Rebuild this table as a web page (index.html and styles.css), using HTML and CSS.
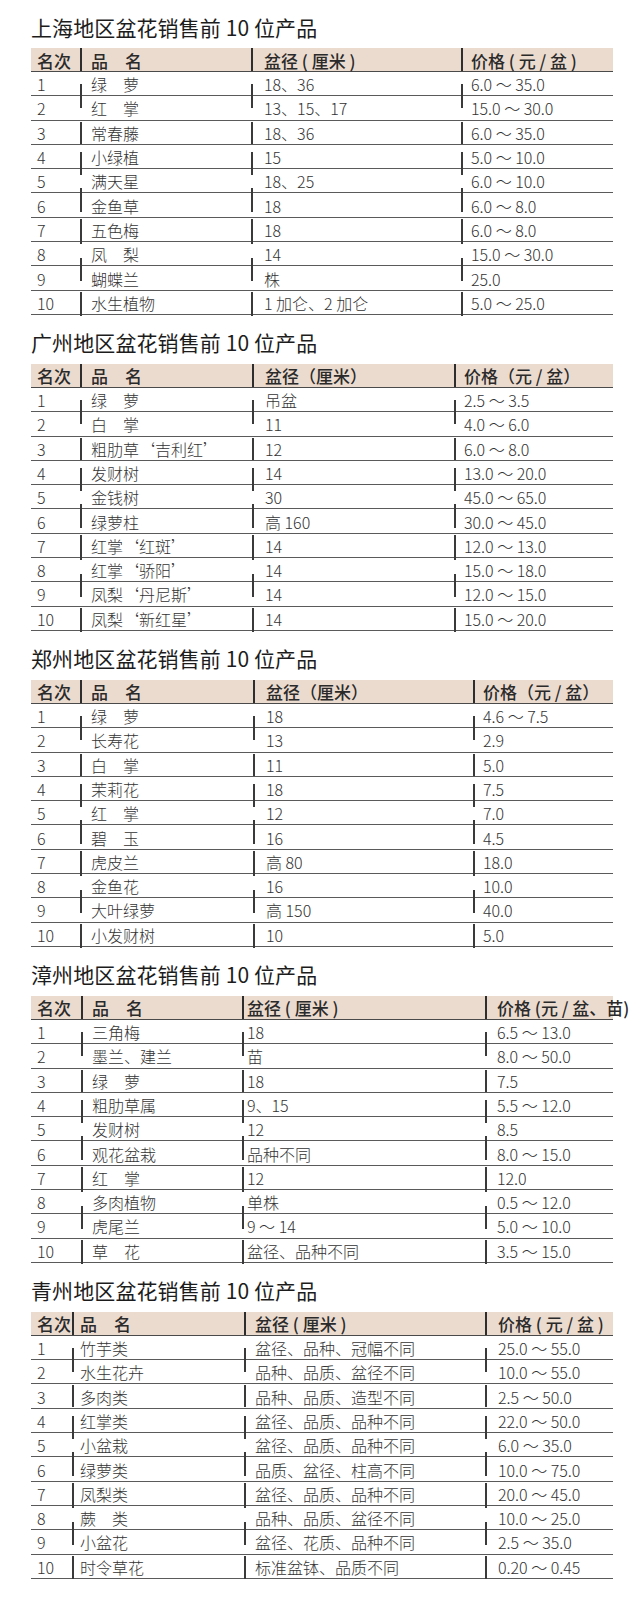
FILE: index.html
```html
<!DOCTYPE html>
<html lang="zh-CN">
<head>
<meta charset="utf-8">
<title>盆花销售前 10 位产品</title>
<link rel="stylesheet" href="styles.css">
</head>
<body>
<div class="page">

  <section class="sec t1">
    <h2 class="title">上海地区盆花销售前 10 位产品</h2>
    <div class="tbl">
      <div class="row head"><div class="c">名次</div><div class="c">品　名</div><div class="c">盆径 ( 厘米 )</div><div class="c">价格 ( 元 / 盆 )</div></div>
      <div class="row r1"><div class="c">1</div><div class="c">绿　萝</div><div class="c">18、36</div><div class="c">6.0 ～ 35.0</div></div>
      <div class="row r2"><div class="c">2</div><div class="c">红　掌</div><div class="c">13、15、17</div><div class="c">15.0 ～ 30.0</div></div>
      <div class="row r3"><div class="c">3</div><div class="c">常春藤</div><div class="c">18、36</div><div class="c">6.0 ～ 35.0</div></div>
      <div class="row r4"><div class="c">4</div><div class="c">小绿植</div><div class="c">15</div><div class="c">5.0 ～ 10.0</div></div>
      <div class="row r5"><div class="c">5</div><div class="c">满天星</div><div class="c">18、25</div><div class="c">6.0 ～ 10.0</div></div>
      <div class="row r6"><div class="c">6</div><div class="c">金鱼草</div><div class="c">18</div><div class="c">6.0 ～ 8.0</div></div>
      <div class="row r7"><div class="c">7</div><div class="c">五色梅</div><div class="c">18</div><div class="c">6.0 ～ 8.0</div></div>
      <div class="row r8"><div class="c">8</div><div class="c">凤　梨</div><div class="c">14</div><div class="c">15.0 ～ 30.0</div></div>
      <div class="row r9"><div class="c">9</div><div class="c">蝴蝶兰</div><div class="c">株</div><div class="c">25.0</div></div>
      <div class="row r10"><div class="c">10</div><div class="c">水生植物</div><div class="c">1 加仑、2 加仑</div><div class="c">5.0 ～ 25.0</div></div>
    </div>
  </section>

  <section class="sec t2">
    <h2 class="title">广州地区盆花销售前 10 位产品</h2>
    <div class="tbl">
      <div class="row head"><div class="c">名次</div><div class="c">品　名</div><div class="c">盆径（厘米）</div><div class="c">价格（元 / 盆）</div></div>
      <div class="row r1"><div class="c">1</div><div class="c">绿　萝</div><div class="c">吊盆</div><div class="c">2.5 ～ 3.5</div></div>
      <div class="row r2"><div class="c">2</div><div class="c">白　掌</div><div class="c">11</div><div class="c">4.0 ～ 6.0</div></div>
      <div class="row r3"><div class="c">3</div><div class="c">粗肋草‘吉利红’</div><div class="c">12</div><div class="c">6.0 ～ 8.0</div></div>
      <div class="row r4"><div class="c">4</div><div class="c">发财树</div><div class="c">14</div><div class="c">13.0 ～ 20.0</div></div>
      <div class="row r5"><div class="c">5</div><div class="c">金钱树</div><div class="c">30</div><div class="c">45.0 ～ 65.0</div></div>
      <div class="row r6"><div class="c">6</div><div class="c">绿萝柱</div><div class="c">高 160</div><div class="c">30.0 ～ 45.0</div></div>
      <div class="row r7"><div class="c">7</div><div class="c">红掌‘红斑’</div><div class="c">14</div><div class="c">12.0 ～ 13.0</div></div>
      <div class="row r8"><div class="c">8</div><div class="c">红掌‘骄阳’</div><div class="c">14</div><div class="c">15.0 ～ 18.0</div></div>
      <div class="row r9"><div class="c">9</div><div class="c">凤梨‘丹尼斯’</div><div class="c">14</div><div class="c">12.0 ～ 15.0</div></div>
      <div class="row r10"><div class="c">10</div><div class="c">凤梨‘新红星’</div><div class="c">14</div><div class="c">15.0 ～ 20.0</div></div>
    </div>
  </section>

  <section class="sec t3">
    <h2 class="title">郑州地区盆花销售前 10 位产品</h2>
    <div class="tbl">
      <div class="row head"><div class="c">名次</div><div class="c">品　名</div><div class="c">盆径（厘米）</div><div class="c">价格（元 / 盆）</div></div>
      <div class="row r1"><div class="c">1</div><div class="c">绿　萝</div><div class="c">18</div><div class="c">4.6 ～ 7.5</div></div>
      <div class="row r2"><div class="c">2</div><div class="c">长寿花</div><div class="c">13</div><div class="c">2.9</div></div>
      <div class="row r3"><div class="c">3</div><div class="c">白　掌</div><div class="c">11</div><div class="c">5.0</div></div>
      <div class="row r4"><div class="c">4</div><div class="c">茉莉花</div><div class="c">18</div><div class="c">7.5</div></div>
      <div class="row r5"><div class="c">5</div><div class="c">红　掌</div><div class="c">12</div><div class="c">7.0</div></div>
      <div class="row r6"><div class="c">6</div><div class="c">碧　玉</div><div class="c">16</div><div class="c">4.5</div></div>
      <div class="row r7"><div class="c">7</div><div class="c">虎皮兰</div><div class="c">高 80</div><div class="c">18.0</div></div>
      <div class="row r8"><div class="c">8</div><div class="c">金鱼花</div><div class="c">16</div><div class="c">10.0</div></div>
      <div class="row r9"><div class="c">9</div><div class="c">大叶绿萝</div><div class="c">高 150</div><div class="c">40.0</div></div>
      <div class="row r10"><div class="c">10</div><div class="c">小发财树</div><div class="c">10</div><div class="c">5.0</div></div>
    </div>
  </section>

  <section class="sec t4">
    <h2 class="title">漳州地区盆花销售前 10 位产品</h2>
    <div class="tbl">
      <div class="row head"><div class="c">名次</div><div class="c">品　名</div><div class="c">盆径 ( 厘米 )</div><div class="c">价格 (元 / 盆、苗)</div></div>
      <div class="row r1"><div class="c">1</div><div class="c">三角梅</div><div class="c">18</div><div class="c">6.5 ～ 13.0</div></div>
      <div class="row r2"><div class="c">2</div><div class="c">墨兰、建兰</div><div class="c">苗</div><div class="c">8.0 ～ 50.0</div></div>
      <div class="row r3"><div class="c">3</div><div class="c">绿　萝</div><div class="c">18</div><div class="c">7.5</div></div>
      <div class="row r4"><div class="c">4</div><div class="c">粗肋草属</div><div class="c">9、15</div><div class="c">5.5 ～ 12.0</div></div>
      <div class="row r5"><div class="c">5</div><div class="c">发财树</div><div class="c">12</div><div class="c">8.5</div></div>
      <div class="row r6"><div class="c">6</div><div class="c">观花盆栽</div><div class="c">品种不同</div><div class="c">8.0 ～ 15.0</div></div>
      <div class="row r7"><div class="c">7</div><div class="c">红　掌</div><div class="c">12</div><div class="c">12.0</div></div>
      <div class="row r8"><div class="c">8</div><div class="c">多肉植物</div><div class="c">单株</div><div class="c">0.5 ～ 12.0</div></div>
      <div class="row r9"><div class="c">9</div><div class="c">虎尾兰</div><div class="c">9 ～ 14</div><div class="c">5.0 ～ 10.0</div></div>
      <div class="row r10"><div class="c">10</div><div class="c">草　花</div><div class="c">盆径、品种不同</div><div class="c">3.5 ～ 15.0</div></div>
    </div>
  </section>

  <section class="sec t5">
    <h2 class="title">青州地区盆花销售前 10 位产品</h2>
    <div class="tbl">
      <div class="row head"><div class="c">名次</div><div class="c">品　名</div><div class="c">盆径 ( 厘米 )</div><div class="c">价格 ( 元 / 盆 )</div></div>
      <div class="row r1"><div class="c">1</div><div class="c">竹芋类</div><div class="c">盆径、品种、冠幅不同</div><div class="c">25.0 ～ 55.0</div></div>
      <div class="row r2"><div class="c">2</div><div class="c">水生花卉</div><div class="c">品种、品质、盆径不同</div><div class="c">10.0 ～ 55.0</div></div>
      <div class="row r3"><div class="c">3</div><div class="c">多肉类</div><div class="c">品种、品质、造型不同</div><div class="c">2.5 ～ 50.0</div></div>
      <div class="row r4"><div class="c">4</div><div class="c">红掌类</div><div class="c">盆径、品质、品种不同</div><div class="c">22.0 ～ 50.0</div></div>
      <div class="row r5"><div class="c">5</div><div class="c">小盆栽</div><div class="c">盆径、品质、品种不同</div><div class="c">6.0 ～ 35.0</div></div>
      <div class="row r6"><div class="c">6</div><div class="c">绿萝类</div><div class="c">品质、盆径、柱高不同</div><div class="c">10.0 ～ 75.0</div></div>
      <div class="row r7"><div class="c">7</div><div class="c">凤梨类</div><div class="c">盆径、品质、品种不同</div><div class="c">20.0 ～ 45.0</div></div>
      <div class="row r8"><div class="c">8</div><div class="c">蕨　类</div><div class="c">品种、品质、盆径不同</div><div class="c">10.0 ～ 25.0</div></div>
      <div class="row r9"><div class="c">9</div><div class="c">小盆花</div><div class="c">盆径、花质、品种不同</div><div class="c">2.5 ～ 35.0</div></div>
      <div class="row r10"><div class="c">10</div><div class="c">时令草花</div><div class="c">标准盆钵、品质不同</div><div class="c">0.20 ～ 0.45</div></div>
    </div>
  </section>

</div>
</body>
</html>
```

FILE: styles.css
```css
html, body {
  margin: 0;
  padding: 0;
  background: #ffffff;
}

body {
  font-family: "Noto Sans CJK SC", "Noto Sans", "DejaVu Sans", sans-serif;
  color: #333333;
}

.page {
  width: 582px;
  padding: 13.5px 0 0 31px;
}

.sec {
  --cols: 50px 171px 210px 151px;
  --p1: 6px;
  --p2: 10px;
  --p3: 12px;
  --p4: 9px;
}

.t2 { --cols: 50px 172px 202px 158px; }
.t3 { --cols: 50px 173px 220px 139px; }
.t4 { --cols: 51px 161px 243px 127px; --p3: 4px; --p4: 11px; }
.t5 { --cols: 42px 172px 241px 127px; --p2: 7px; --p3: 10px; --p4: 12px; }

.title {
  margin: 14.5px 0 8.5px;
  font-size: 21px;
  line-height: 26px;
  font-weight: 400;
  color: #1c1c1c;
  letter-spacing: 0.1px;
}

.t1 .title { margin-top: 0; }

.tbl {
  display: flex;
  flex-direction: column;
}

.row {
  display: grid;
  grid-template-columns: var(--cols);
  height: 24.3px;
  box-sizing: border-box;
  border-bottom: 1.5px solid #5a5a5a;
  --o: 1px;
  --h: 23px;
}

.c {
  position: relative;
  display: flex;
  align-items: center;
  white-space: nowrap;
  font-size: 16px;
  font-weight: 300;
  line-height: 1;
  padding-top: 1px;
}

.c:nth-child(1) { padding-left: var(--p1); }
.c:nth-child(2) { padding-left: var(--p2); }
.c:nth-child(3) { padding-left: var(--p3); }
.c:nth-child(4) { padding-left: var(--p4); }

/* broken vertical rules of the printed table */
.c + .c::before {
  content: "";
  position: absolute;
  left: -1px;
  top: var(--o);
  width: 1.5px;
  height: var(--h);
  background: #3a3a3a;
  z-index: 1;
}

.r1 { --o: 12px; --h: 24px; }
.r2 { --h: 0px; }
.r3 { --o: 1px; --h: 22px; }
.r4 { --o: 7px; --h: 23px; }
.r5 { --h: 0px; }
.r6 { --o: -5px; --h: 24px; }
.r7 { --o: 1px; --h: 25px; }
.r8 { --o: 16px; --h: 23px; }
.r9 { --h: 0px; }
.r10 { --o: 1px; --h: 24px; }

.row.head {
  height: 24px;
  background: #ebdbcf;
  border-bottom: 1.5px solid #4a4a4a;
  --o: 0px;
  --h: 24px;
}

.head .c {
  font-size: 17px;
  font-weight: 500;
  color: #2a2a2a;
}

.head .c + .c::before {
  top: 0;
  height: 100%;
  background: #2e2e2e;
}
```
